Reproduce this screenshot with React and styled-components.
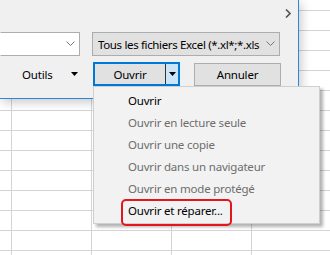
import React from 'react';
import styled, { createGlobalStyle } from 'styled-components';

const GlobalStyle = createGlobalStyle`
  html, body {
    margin: 0;
    padding: 0;
    background: #fff;
  }
  body {
    font-family: 'Noto Sans', 'Liberation Sans', sans-serif;
    font-size: 11.5px;
    letter-spacing: -0.2px;
    color: #000;
  }
`;

// spreadsheet behind the dialog
const Sheet = styled.div`
  position: relative;
  width: 330px;
  height: 255px;
  overflow: hidden;
  background-color: #fff;
  background-image: linear-gradient(to bottom, transparent 19px, #d4d4d4 19px),
    linear-gradient(to right, transparent 79px, #d4d4d4 79px);
  background-size: 100% 20px, 80px 100%;
  background-position: 0 -9px, 12px 0;
`;

const Dialog = styled.div`
  width: 298px;
  height: 98px;
  background: #f0f0f0;
  border-right: 1px solid #2b88d8;
  border-bottom: 1px solid #2b88d8;
  box-shadow: 2px 3px 10px rgba(0, 0, 0, 0.22);
  display: flex;
  flex-direction: column;
`;

const TopBar = styled.div`
  height: 32px;
  display: flex;
  justify-content: flex-end;
  padding: 9px 7px 0 0;
  box-sizing: border-box;
`;

const Row = styled.div`
  display: flex;
  align-items: center;
  gap: ${p => p.gap}px;
  height: 24px;
  margin-bottom: ${p => p.mb || 0}px;
`;

const Combo = styled.div`
  box-sizing: border-box;
  width: ${p => p.w}px;
  height: 24px;
  display: flex;
  align-items: center;
  justify-content: space-between;
  gap: 4px;
  padding: 0 4px 0 5px;
  background: ${p => (p.filled ? '#e1e1e1' : '#fff')};
  border: 1px solid #adadad;
  border-left-color: ${p => (p.cut ? 'transparent' : '#adadad')};
  white-space: nowrap;
  svg {
    flex-shrink: 0;
  }
`;

const ComboText = styled.span`
  flex: 1;
  overflow: hidden;
  letter-spacing: -0.35px;
`;

const ToolsLabel = styled.div`
  width: 93px;
  box-sizing: border-box;
  display: flex;
  align-items: center;
  padding-left: 22px;
  gap: 19px;
`;

const SplitButton = styled.div`
  box-sizing: border-box;
  width: 87px;
  height: 24px;
  display: flex;
  border: 2px solid #0078d7;
  background: #e1e1e1;
`;

const SplitMain = styled.div`
  flex: 1;
  display: flex;
  align-items: center;
  justify-content: center;
`;

const SplitArrow = styled.div`
  width: 12px;
  display: flex;
  align-items: center;
  justify-content: center;
  background: #cce4f7;
  border-left: 1px solid #333;
`;

const Button = styled.div`
  box-sizing: border-box;
  width: 87px;
  height: 23px;
  margin-left: 14px;
  display: flex;
  align-items: center;
  justify-content: center;
  background: #e1e1e1;
  border: 1px solid #adadad;
`;

const Menu = styled.div`
  position: absolute;
  left: 93px;
  top: 86px;
  width: 227px;
  box-sizing: border-box;
  padding: 2px 0 2px;
  background: #f2f2f2;
  border: 1px solid #cfcfcf;
  box-shadow: 3px 3px 3px rgba(0, 0, 0, 0.3);
`;

const MenuItem = styled.div`
  position: relative;
  height: 22px;
  display: flex;
  align-items: center;
  padding-left: 34px;
  color: ${p => (p.disabled ? '#6d6d6d' : '#000')};
  white-space: nowrap;
`;

const Highlight = styled.div`
  position: absolute;
  left: 27px;
  top: 0;
  width: 111px;
  height: 27px;
  box-sizing: border-box;
  border: 2px solid #e2161b;
  border-radius: 5px;
`;

const Caret = () => (
  <svg width="7" height="4" viewBox="0 0 7 4">
    <path d="M0 0 L7 0 L3.5 4 Z" fill="#000" />
  </svg>
);

const Chevron = () => (
  <svg width="9" height="6" viewBox="0 0 9 6">
    <path d="M0.5 0.5 L4.5 4.5 L8.5 0.5" fill="none" stroke="#777" strokeWidth="1" />
  </svg>
);

const menuItems = [
  { label: 'Ouvrir' },
  { label: 'Ouvrir en lecture seule', disabled: true },
  { label: 'Ouvrir une copie', disabled: true },
  { label: 'Ouvrir dans un navigateur', disabled: true },
  { label: 'Ouvrir en mode protégé', disabled: true },
  { label: 'Ouvrir et réparer...', marked: true }
];

export default function App() {
  return (
    <Sheet>
      <GlobalStyle />
      <Dialog>
        <TopBar>
          <svg width="6" height="9" viewBox="0 0 6 9">
            <path d="M1 0.5 L5 4.5 L1 8.5" fill="none" stroke="#555" strokeWidth="1.6" />
          </svg>
        </TopBar>
        <Row gap={12} mb={6}>
          <Combo w={80} cut>
            <ComboText />
            <Chevron />
          </Combo>
          <Combo w={188} filled>
            <ComboText>Tous les fichiers Excel (*.xl*;*.xls</ComboText>
            <Chevron />
          </Combo>
        </Row>
        <Row gap={0}>
          <ToolsLabel>
            <span>Outils</span>
            <Caret />
          </ToolsLabel>
          <SplitButton>
            <SplitMain>Ouvrir</SplitMain>
            <SplitArrow>
              <Caret />
            </SplitArrow>
          </SplitButton>
          <Button>Annuler</Button>
        </Row>
      </Dialog>
      <Menu>
        {menuItems.map(item => (
          <MenuItem key={item.label} disabled={item.disabled}>
            {item.label}
            {item.marked && <Highlight />}
          </MenuItem>
        ))}
      </Menu>
    </Sheet>
  );
}
